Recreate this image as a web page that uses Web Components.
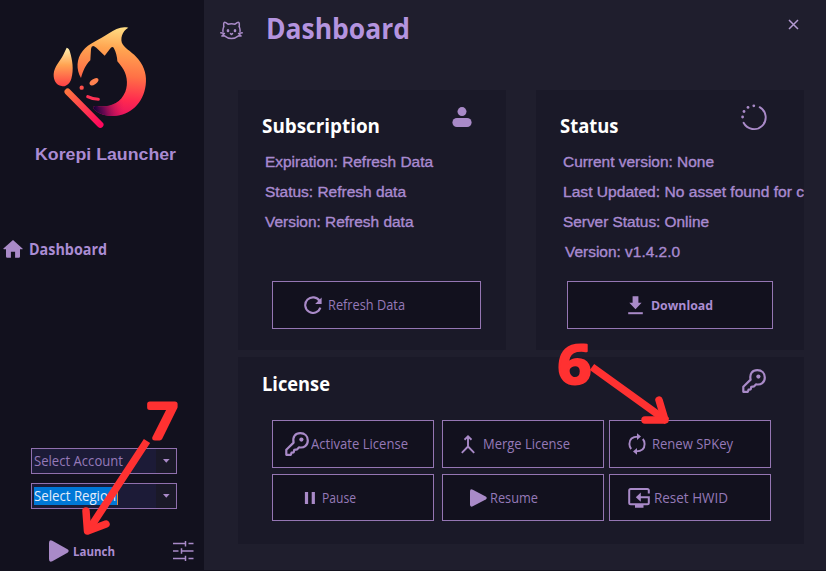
<!DOCTYPE html>
<html lang="en"><head><meta charset="utf-8"><title>Korepi Launcher</title>
<style>
html,body{margin:0;width:826px;height:571px;overflow:hidden;background:#1f1e2d}
body{font-family:"Open Sans","Noto Sans",sans-serif;color:#a98ad0}
</style></head><body>
<launcher-app></launcher-app>
<script>
const define=(name,html,setup)=>customElements.define(name,class extends HTMLElement{
  constructor(){super();this.attachShadow({mode:'open'});}
  connectedCallback(){this.shadowRoot.innerHTML=typeof html==='function'?html(this):html;if(setup)setup(this);}
});

// Single line label whose glyph run is scaled to an exact width.
define('fit-text',`<style>:host{display:block;white-space:nowrap;flex:none}span{display:inline-block;transform-origin:0 50%;vertical-align:top}</style><span><slot></slot></span>`,el=>{
  const s=el.shadowRoot.querySelector('span'),w=+el.getAttribute('w');
  el.style.width=w+'px';
  const r=document.createElement('canvas').getContext('2d');
  const cs=getComputedStyle(el);
  r.font=`${cs.fontWeight} ${cs.fontSize} ${cs.fontFamily}`;
  s.style.transform=`scaleX(${w/r.measureText(el.textContent).width})`;
});

const icons={
 home:[20,18,'<path fill="currentColor" d="M10 0 .4 8.4q-.5.9.6.9H3v7.2q0 1.3 1.2 1.3h3.7v-6h4.2v6h3.6q1.3 0 1.3-1.3V9.3h2q1.2 0 .5-.9Z"/>'],
 cat:[23,19,'<g fill="none" stroke="currentColor" stroke-width="1.5" stroke-linecap="round" stroke-linejoin="round"><path d="M3.700 5.800V2.600Q3.900.8 5.800 1.600l2.200 1.600q3.500-.8 7 0l2.200-1.600q1.900-.8 2.100 1v3.200M3 10.500Q2.600 8 3.900 5.500M20 10.500q.4-2.500-.9-5M.8 11.800l3.600.7L1.900 15l2.600-.2q7 5.500 14 0l2.600.2-2.500-2.500 3.600-.7"/><path d="m10.500 12.600 1 .9 1-.9"/></g><ellipse cx="8" cy="9.700" rx="1.300" ry="1.600" fill="currentColor"/><ellipse cx="15" cy="9.700" rx="1.300" ry="1.600" fill="currentColor"/>'],
 close:[11,11,'<path d="M1 1l9 9M10 1l-9 9" stroke="currentColor" stroke-width="1.5"/>'],
 user:[20,20,'<circle cx="10" cy="4.6" r="4.5" fill="currentColor"/><rect x=".4" y="11" width="19.2" height="9" rx="4.5" fill="currentColor"/>'],
 spin:[26,27,'<path d="M18.7 3.2A11.7 11.7 0 1 1 2.6 18.8" fill="none" stroke="currentColor" stroke-width="1.9" stroke-linecap="round"/><g fill="currentColor"><circle cx="12.8" cy="1.8" r="1.4"/><circle cx="7" cy="3.4" r="1.4"/><circle cx="3" cy="7.5" r="1.4"/><circle cx="1.6" cy="13" r="1.4"/></g>'],
 key:[24,24,'<path fill="none" stroke="currentColor" stroke-width="2.2" stroke-linejoin="round" d="M1.3 17.8 8.6 10.600C7.300 4.500 10.500 1.200 15.300 1.200c4.500 0 7.500 3 7.500 7.200 0 4.900-3.900 7.900-8.700 6.900l-1.900 2-2.900.5-.6 2.500-2.200.4-.6 2.100H1.300Z"/><circle cx="16.400" cy="7.600" r="2.100" fill="currentColor"/>'],
 refresh:[18,18,'<path d="M15.7 5.1A7.8 7.8 0 1 0 16.4 11.7" fill="none" stroke="currentColor" stroke-width="2.1"/><path d="M17.6 1.5v6.4h-6.5Z" fill="currentColor"/>'],
 download:[15,19,'<path d="M4.6.2h5.8v6.6h3.2L7.5 13.3 1.3 6.8h3.3Z" fill="currentColor"/><path d="M.2 17.2h14.6" stroke="currentColor" stroke-width="2"/>'],
 merge:[14,19,'<path d="M7 2v8.500M.8 17.800 7 11.500V9.500M7 11.500l6.200 6.300M3.500 4.800 7 1.400l3.500 3.400" fill="none" stroke="currentColor" stroke-width="1.9"/>'],
 renew:[18,22,'<path d="M10 3.6Q1.4 3.6 1.4 11q0 3 1.8 5M8 18.4Q16.6 18.4 16.6 11q0-3-1.8-5" fill="none" stroke="currentColor" stroke-width="1.9"/><path d="M9 .2v6.8l4-3.4ZM9 15v6.8l-4-3.4Z" fill="currentColor"/>'],
 pause:[12,12,'<path d="M2.5 0v12M9.3 0v12" stroke="currentColor" stroke-width="3.2"/>'],
 play:[20,22,'<path d="M0 3Q0-.8 3.3.8L18.5 9.3q2.4 1.7 0 3.4L3.3 21.2Q0 22.7 0 19Z" fill="currentColor"/>'],
 reset:[22,20,'<path d="M20.8 5.5V2.6q0-1.5-1.5-1.5H2.7q-1.5 0-1.5 1.5v12.1q0 1.5 1.5 1.5h16.6q1.5 0 1.5-1.5V9.2H11" fill="none" stroke="currentColor" stroke-width="2"/><path d="m12.8 4.5-5 4.7 5 4.6ZM7 17h8.500v2.700H7Z" fill="currentColor"/>'],
 sliders:[21,20,'<path d="M0 2.600h12.500M15.500 2.600H20.500M0 10h5.500M8.500 10h12M0 17.400h12.500M15.500 17.400H20.500M12.500 0v5.400M8.500 7.200v5.600M12.500 14.700v5.300" stroke="currentColor" stroke-width="1.5"/>'],
 down:[7,4,'<path d="M0 0h6.6L3.3 3.8Z" fill="currentColor"/>']
};
define('ui-icon',el=>{const [w,h,b]=icons[el.getAttribute('name')];
 const W=el.getAttribute('w')||w,H=el.getAttribute('h')||h;
 return `<style>:host{display:block;flex:none;width:${W}px;height:${H}px;color:#a98ac8}svg{display:block}</style><svg width="${W}" height="${H}" viewBox="0 0 ${w} ${h}" preserveAspectRatio="none">${b}</svg>`});

define('flame-logo',`<style>:host{display:block;width:120px;height:120px}svg{display:block}</style>
<svg width="120" height="120" viewBox="0 0 360 360"><defs>
<linearGradient id="a" gradientUnits="userSpaceOnUse" x1="240" y1="35" x2="215" y2="300"><stop offset="0" stop-color="#ffdf86"/><stop offset=".25" stop-color="#ffa551"/><stop offset=".55" stop-color="#ff7146"/><stop offset=".82" stop-color="#ff294f"/><stop offset="1" stop-color="#e9145f"/></linearGradient>
<linearGradient id="b" x1="0" y1="0" x2="0" y2="1"><stop offset="0" stop-color="#fff0b0"/><stop offset=".45" stop-color="#ffa352"/><stop offset="1" stop-color="#ff3f45"/></linearGradient>
<linearGradient id="c" gradientUnits="userSpaceOnUse" x1="85" y1="225" x2="180" y2="330"><stop stop-color="#ff743f"/><stop offset="1" stop-color="#ff075d"/></linearGradient>
<linearGradient id="d" gradientUnits="userSpaceOnUse" x1="163" y1="280" x2="250" y2="262"><stop stop-color="#160337"/><stop offset=".3" stop-color="#5b0750" stop-opacity=".9"/><stop offset="1" stop-color="#d5135c" stop-opacity="0"/></linearGradient></defs>
<path fill="url(#a)" d="M123 189C108 163 109 132 128 108C146 85 178 75 207 55C225 42 245 33 265 38C246 48 239 73 248 88C257 103 280 113 295 133C314 156 321 183 317 211C310 265 271 302 221 303C199 303 178 298 163 284C154 274 165 272 176 274C214 276 242 263 256 230C266 206 260 176 246 157Q239 147 232 139Q231 116 221 98Q216 92 209 103L194 122L169 98Q155 87 153 102L151 136C136 151 130 165 123 189Z"/>
<path fill="url(#d)" d="M163 284C154 274 165 272 176 274C214 276 242 263 256 230L280 295L221 303C199 303 178 298 163 284Z"/>
<path fill="url(#b)" d="M80 98Q87 99 90 111C97 134 102 164 94 191C89 207 77 216 65 213C48 211 40 195 41 177C43 154 60 139 70 119Z"/>
<path d="M83 230 181 329" stroke="url(#c)" stroke-width="19" stroke-linecap="round"/>
<ellipse cx="162" cy="200" rx="15" ry="8" transform="rotate(-34 162 200)" fill="#ff8150"/><circle cx="125" cy="218" r="6.5" fill="#ff4f4b"/><path d="M143 245q15 8 32 8" fill="none" stroke="#ff3054" stroke-width="9" stroke-linecap="round"/></svg>`);

define('ui-button',el=>`<style>:host{display:flex;align-items:center;box-sizing:border-box;border:1px solid #9576b3;background:#12111e;font-size:14px;line-height:20px;color:#9579b8}
fit-text{margin:0 0 0 ${el.getAttribute('gap')}px}:host([bold]){font-weight:700;font-size:13px;color:#ab8dd2}</style>
<ui-icon name="${el.getAttribute('icon')}" ${el.hasAttribute('iw')?`w="${el.getAttribute('iw')}" h="${el.getAttribute('ih')}"`:''}></ui-icon><fit-text w="${el.getAttribute('tw')}">${el.getAttribute('label')}</fit-text>`);

define('combo-box',el=>`<style>:host{display:flex;box-sizing:border-box;width:146px;height:26px;border:1px solid #9070ae;background:#1c1b37;font-size:14px;line-height:18px;align-items:center;color:#9579b8}
.t{flex:1;padding-left:2px;display:flex}.b{width:20px;height:100%;background:#1a1928;display:grid;place-items:center}
fit-text{padding-right:1px}:host([selected]) fit-text{background:#0078d7;color:#e4ecfa;border-right:1px solid #d7893f}</style><div class="t"><fit-text w="${el.getAttribute('tw')}">${el.getAttribute('label')}</fit-text></div><div class="b"><ui-icon name="down"></ui-icon></div>`);

define('info-card',`<style>:host{display:block;box-sizing:border-box;background:#1a1928;overflow:hidden}
header{display:flex;justify-content:space-between;height:28px;color:#fff;font-weight:700;font-size:19.5px;line-height:28px}</style><header><slot name="title"></slot><slot name="icon"></slot></header><slot></slot><slot name="actions"></slot>`);

define('side-bar',`<style>:host{display:flex;flex-direction:column;width:204px;height:571px;background:#12111e;flex:none}
flame-logo{margin:15px 0 0 40px}.name{margin:8px 0 0 35px;font:700 17px/24px "Liberation Sans",sans-serif;color:#aa8bd2}
.nav{display:flex;align-items:center;margin:70px 0 0 3px;gap:5.5px;font-weight:700;font-size:15.5px;line-height:24px;color:#aa8cd3}
.combos{display:grid;gap:9px;margin:187px 0 0 31px}.foot{display:flex;align-items:center;margin:30px 0 0 49px;height:24px;font-weight:700;font-size:13px;line-height:20px;color:#ab8dd2}.foot fit-text{margin-left:4px}.foot ui-icon:last-child{margin-left:58px}</style>
<flame-logo></flame-logo><fit-text class="name" w="141">Korepi Launcher</fit-text>
<div class="nav"><ui-icon name="home"></ui-icon><fit-text w="78">Dashboard</fit-text></div>
<div class="combos"><combo-box label="Select Account" tw="89"></combo-box><combo-box selected label="Select Region" tw="82"></combo-box></div>
<div class="foot"><ui-icon name="play"></ui-icon><fit-text w="42">Launch</fit-text><ui-icon name="sliders"></ui-icon></div>`);

define('dashboard-view',`<style>:host{display:block;box-sizing:border-box;width:622px;height:571px;background:#1f1e2d;padding:0 22px 0 34px}
.top{display:flex;height:90px;margin-left:-18px;align-items:flex-start}.top>ui-icon:first-child{margin-top:21px}
h1{margin:8px 0 0 23px;font-size:28px;line-height:40px;color:#b494df}.x{margin:19px 5px 0 auto;color:#b39ad2}
.cards{display:flex;gap:30px}.cards info-card{width:268px;height:260px;padding:21px 0 0 24px}
.body{height:135px;box-sizing:border-box;padding:8px 0 0 3px;font:14px/30px "Liberation Sans",sans-serif;-webkit-text-stroke:.35px #a98ad0}
fit-text[slot]{margin-top:1px}
.user{margin:-4px 34px 0 0}.spin{margin:-7px 37px 0 0}.kic{margin:0 38px 0 0}
.lic{margin-top:7px;height:187px;padding:12px 0 0 24px}
.one{display:flex;margin:7px 0 0 10px}.two{margin-left:7px}
.one ui-button{height:48px}
.grid{display:grid;grid-template-columns:170px 167px 162px;grid-template-rows:48px 47px;row-gap:6px;margin:23px 0 0 10px}
.grid ui-button{width:162px}
</style>
<div class="top"><ui-icon name="cat"></ui-icon><h1><fit-text w="144">Dashboard</fit-text></h1><ui-icon class="x" name="close"></ui-icon></div>
<div class="cards">
<info-card><fit-text slot="title" w="118">Subscription</fit-text><ui-icon class="user" slot="icon" name="user"></ui-icon>
<div class="body"><fit-text w="168">Expiration: Refresh Data</fit-text><fit-text w="141">Status: Refresh data</fit-text><fit-text w="148.500">Version: Refresh data</fit-text></div>
<div class="one" slot="actions"><ui-button style="width:209px;padding-left:31px" icon="refresh" gap="6" tw="77" label="Refresh Data"></ui-button></div></info-card>
<info-card><fit-text slot="title" w="58.500">Status</fit-text><ui-icon class="spin" slot="icon" name="spin"></ui-icon>
<div class="body"><fit-text w="151">Current version: None</fit-text><fit-text w="241">Last Updated: No asset found for c</fit-text><fit-text w="146">Server Status: Online</fit-text><fit-text style="margin-left:2px" w="115">Version: v1.4.2.0</fit-text></div>
<div class="one two" slot="actions"><ui-button bold style="width:206px;padding-left:60px" icon="download" gap="8" tw="62" label="Download"></ui-button></div></info-card>
</div>
<info-card class="lic"><fit-text slot="title" w="68">License</fit-text><ui-icon class="kic" slot="icon" name="key"></ui-icon>
<div class="grid" slot="actions">
<ui-button style="padding-left:12px" icon="key" gap="2" tw="97" label="Activate License"></ui-button>
<ui-button style="padding-left:18px" icon="merge" gap="8" tw="87" label="Merge License"></ui-button>
<ui-button style="padding-left:18px" icon="renew" gap="6" tw="81" label="Renew SPKey"></ui-button>
<ui-button style="padding-left:31px" icon="pause" gap="6" tw="34" label="Pause"></ui-button>
<ui-button style="padding-left:27px" icon="play" iw="17" ih="18" gap="3" tw="48" label="Resume"></ui-button>
<ui-button style="padding-left:18px" icon="reset" gap="4" tw="74" label="Reset HWID"></ui-button>
</div></info-card>`);

define('step-marks',`<style>:host{position:absolute;left:0;top:0;width:826px;height:571px;pointer-events:none}svg{display:block}text{font:700 53px "Open Sans",sans-serif;fill:#ff3131;stroke:#ff3131;stroke-linejoin:round}</style>
<svg width="826" height="571"><g fill="none" stroke="#ff3131" stroke-width="7.5" stroke-linejoin="round"><path d="M592 367 667 421M147 441 88 531"/><path stroke-linecap="round" d="M659 400 665 420H645M86 511 87.500 531 106 524"/></g>
<text x="557.500" y="384" stroke-width="2" textLength="34" lengthAdjust="spacingAndGlyphs">6</text><text x="147.500" y="437.500" stroke-width="5" style="font-size:48px;font-weight:400" textLength="30" lengthAdjust="spacingAndGlyphs">7</text></svg>`);

define('launcher-app',`<style>:host{display:flex;position:relative;width:826px;height:571px;box-sizing:border-box}.edge{position:absolute;left:0;bottom:0;width:100%;height:1px;background:#14131f}</style><side-bar></side-bar><dashboard-view></dashboard-view><div class="edge"></div><step-marks></step-marks>`);
</script></body></html>
